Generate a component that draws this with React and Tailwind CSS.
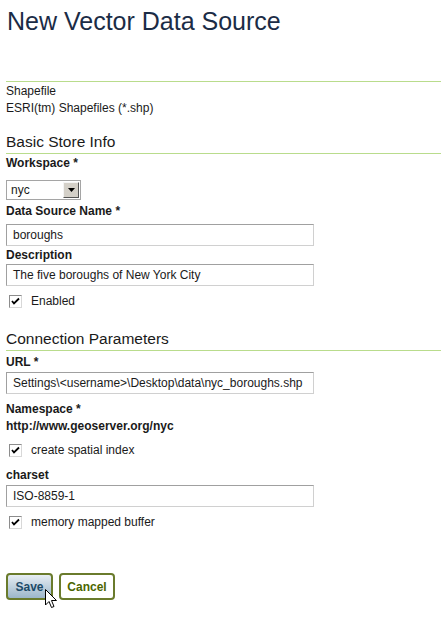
import React from 'react';

const Rule = ({ className = '' }) => (
  <div className={`h-px bg-[#b9dc8c] ${className}`} />
);

const Label = ({ children, className = '' }) => (
  <div className={`font-bold text-[12px] leading-[15px] text-[#1a1a1a] ${className}`}>{children}</div>
);

const TextInput = ({ value, className = '' }) => (
  <div
    className={`w-[308px] h-[22px] flex items-center pl-[6px] overflow-hidden whitespace-nowrap border border-[#a0a0a0] border-b-[#d0d0d0] border-r-[#d0d0d0] bg-white text-[12px] text-[#1a1a1a] ${className}`}
  >
    {value}
  </div>
);

const Check = ({ label, className = '' }) => (
  <div className={`flex items-center h-[14px] ${className}`}>
    <div className="ml-[3px] w-[13px] h-[13px] border border-[#8c8c8c] border-b-[#d8d8d8] border-r-[#d8d8d8] bg-white flex items-center justify-center">
      <svg width="9" height="9" viewBox="0 0 9 9">
        <path d="M1 4 L3 6.5 L8 1.5" fill="none" stroke="#000" strokeWidth="1.8" />
      </svg>
    </div>
    <span className="ml-[9px] text-[12px] text-[#1a1a1a]">{label}</span>
  </div>
);

const Heading = ({ children, className = '' }) => (
  <div className={className}>
    <div className="pl-[6px] text-[15.5px] leading-[18px] text-[#1a1a1a]">{children}</div>
    <Rule className="mt-[2px] ml-[6px]" />
  </div>
);

export default function App() {
  return (
    <div className="relative w-[441px] h-[620px] bg-white overflow-hidden font-['Liberation_Sans',Arial,sans-serif]">
      <h1 className="mt-[9px] pl-[7px] text-[25px] leading-[25px] text-[#1b2c46]">New Vector Data Source</h1>

      <Rule className="mt-[47px] ml-[6px]" />

      <div className="mt-[1px] pl-[6px] text-[12px] leading-[17px] text-[#1a1a1a]">
        <div>Shapefile</div>
        <div>ESRI(tm) Shapefiles (*.shp)</div>
      </div>

      <Heading className="mt-[16px]">Basic Store Info</Heading>

      <div className="pl-[6px]">
        <Label className="mt-[2px]">Workspace *</Label>
        <div className="mt-[9px] w-[75px] h-[20px] flex items-center border border-[#a5a5a5] bg-white">
          <span className="pl-[4px] flex-1 text-[12px] text-[#1a1a1a]">nyc</span>
          <div className="w-[16px] h-[16px] mr-[1px] bg-[#d4d0c8] border border-[#f4f4f4] border-b-[#555] border-r-[#555] flex items-center justify-center">
            <svg width="7" height="4" viewBox="0 0 7 4">
              <path d="M0 0 H7 L3.5 4 Z" fill="#000" />
            </svg>
          </div>
        </div>

        <Label className="mt-[4px]">Data Source Name *</Label>
        <TextInput className="mt-[5px]" value="boroughs" />

        <Label className="mt-[2px]">Description</Label>
        <TextInput className="mt-[1px]" value="The five boroughs of New York City" />

        <Check className="mt-[8px]" label="Enabled" />
      </div>

      <Heading className="mt-[22px]">Connection Parameters</Heading>

      <div className="pl-[6px]">
        <Label className="mt-[4px]">URL *</Label>
        <TextInput className="mt-[2px]" value={'Settings\\<username>\\Desktop\\data\\nyc_boroughs.shp'} />

        <Label className="mt-[8px]">Namespace *</Label>
        <Label className="mt-[2px]">http://www.geoserver.org/nyc</Label>

        <Check className="mt-[9px]" label="create spatial index" />

        <Label className="mt-[11px]">charset</Label>
        <TextInput className="mt-[2px]" value="ISO-8859-1" />

        <Check className="mt-[8px]" label="memory mapped buffer" />

        <div className="mt-[44px] flex gap-[6px]">
          <button className="w-[47px] h-[27px] rounded-[4px] border-2 border-[#6a7b2c] bg-gradient-to-b from-[#e6edf3] to-[#9cb6ca] font-bold text-[12px] text-[#1d4a68]">
            Save
          </button>
          <button className="w-[56px] h-[27px] rounded-[4px] border-2 border-[#6a7b2c] bg-white font-bold text-[12px] text-[#4b6500]">
            Cancel
          </button>
        </div>
      </div>

      <svg className="absolute left-[45px] top-[589px]" width="13" height="20" viewBox="0 0 13 20">
        <path
          d="M0.5 0.5 V16 L4 12.5 L6.5 18.5 L9 17.5 L6.5 11.5 H11.5 Z"
          fill="#fff"
          stroke="#000"
          strokeWidth="1"
          strokeLinejoin="miter"
        />
      </svg>
    </div>
  );
}
